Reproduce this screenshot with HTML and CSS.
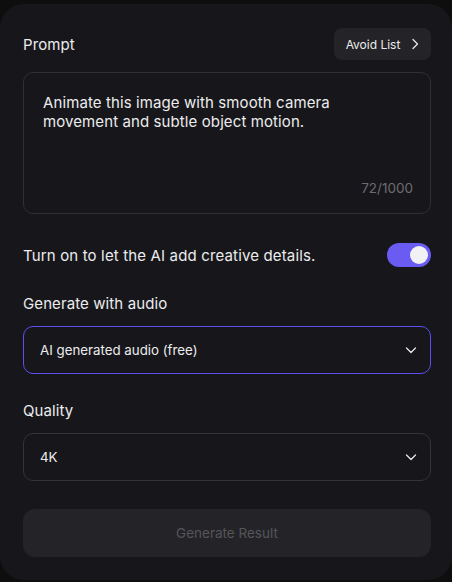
FILE: index.html
```html
<!DOCTYPE html>
<html>
<head>
<meta charset="utf-8">
<link rel="stylesheet" href="styles.css">
</head>
<body>
<div class="card">
  <div class="head">
    <span class="label">Prompt</span>
    <button class="avoid">Avoid List
      <svg width="12" height="12" viewBox="0 0 12 12" fill="none"><path d="M4 1.5 8.5 6 4 10.5" stroke="#e6e6e8" stroke-width="1.3" stroke-linecap="round" stroke-linejoin="round"/></svg>
    </button>
  </div>
  <div class="prompt">
    <p class="prompt-text">Animate this image with smooth camera movement and subtle object motion.</p>
    <span class="count">72/1000</span>
  </div>
  <div class="toggle-row">
    <span class="toggle-text">Turn on to let the AI add creative details.</span>
    <span class="switch"><span class="knob"></span></span>
  </div>
  <div class="label sec">Generate with audio</div>
  <div class="select active">
    <span>AI generated audio (free)</span>
    <svg width="14" height="14" viewBox="0 0 14 14" fill="none"><path d="M2.5 5 7 9.5 11.5 5" stroke="#e6e6e8" stroke-width="1.3" stroke-linecap="round" stroke-linejoin="round"/></svg>
  </div>
  <div class="label sec q">Quality</div>
  <div class="select">
    <span>4K</span>
    <svg width="14" height="14" viewBox="0 0 14 14" fill="none"><path d="M2.5 5 7 9.5 11.5 5" stroke="#e6e6e8" stroke-width="1.3" stroke-linecap="round" stroke-linejoin="round"/></svg>
  </div>
  <button class="generate">Generate Result</button>
</div>
</body>
</html>
```
FILE: styles.css
```css
html, body { margin: 0; padding: 0; }
body {
  background: #0e0e0f;
  font-family: "Inter", "Lato", sans-serif;
  color: #ececee;
  width: 452px;
  height: 582px;
  overflow: hidden;
}
.card {
  margin-top: 4px;
  height: 576px;
  box-sizing: border-box;
  background: #17171b;
  border-radius: 24px;
  padding: 24px 21px 0 23px;
  display: flex;
  flex-direction: column;
}
.head {
  display: flex;
  justify-content: space-between;
  align-items: center;
  height: 32px;
}
.label {
  font-size: 15px;
  color: #ececee;
  letter-spacing: 0.1px;
}
.avoid {
  height: 32px;
  width: 97px;
  border: none;
  border-radius: 8px;
  background: #242428;
  color: #ececee;
  font-family: inherit;
  font-size: 12px;
  display: flex;
  align-items: center;
  justify-content: center;
  gap: 9px;
  padding: 0 0 0 2px;
}
.prompt {
  margin-top: 12px;
  height: 142px;
  box-sizing: border-box;
  border: 1px solid #2f2f34;
  border-radius: 10px;
  padding: 20px 17px 17px 19px;
  display: flex;
  flex-direction: column;
  justify-content: space-between;
}
.prompt-text {
  margin: 0;
  font-size: 15px;
  letter-spacing: 0.1px;
  line-height: 19px;
  color: #ececee;
  width: 310px;
}
.count {
  align-self: flex-end;
  font-size: 13.5px;
  color: #6c6c70;
}
.toggle-row {
  margin-top: 29px;
  display: flex;
  justify-content: space-between;
  align-items: center;
  height: 24px;
}
.toggle-text { font-size: 15px; letter-spacing: 0.15px; color: #ececee; }
.switch {
  width: 44px;
  height: 24px;
  border-radius: 12px;
  background: #6a5cf2;
  display: flex;
  align-items: center;
  justify-content: flex-end;
  padding: 0 3px;
  box-sizing: border-box;
}
.knob {
  width: 18px;
  height: 18px;
  border-radius: 50%;
  background: #f2f2f4;
}
.sec { margin-top: 27px; line-height: 20px; }
.q { margin-top: 27px; }
.select {
  margin-top: 12px;
  height: 48px;
  box-sizing: border-box;
  border: 1px solid #333338;
  border-radius: 10px;
  display: flex;
  align-items: center;
  justify-content: space-between;
  padding: 0 12px 0 16px;
  font-size: 13.3px;
  color: #ececee;
}
.select.active { border-color: #5b4ff0; }
.generate {
  margin-top: 28px;
  height: 48px;
  border: none;
  border-radius: 12px;
  background: #242428;
  color: #55555a;
  font-family: inherit;
  font-size: 13.5px;
}
```
